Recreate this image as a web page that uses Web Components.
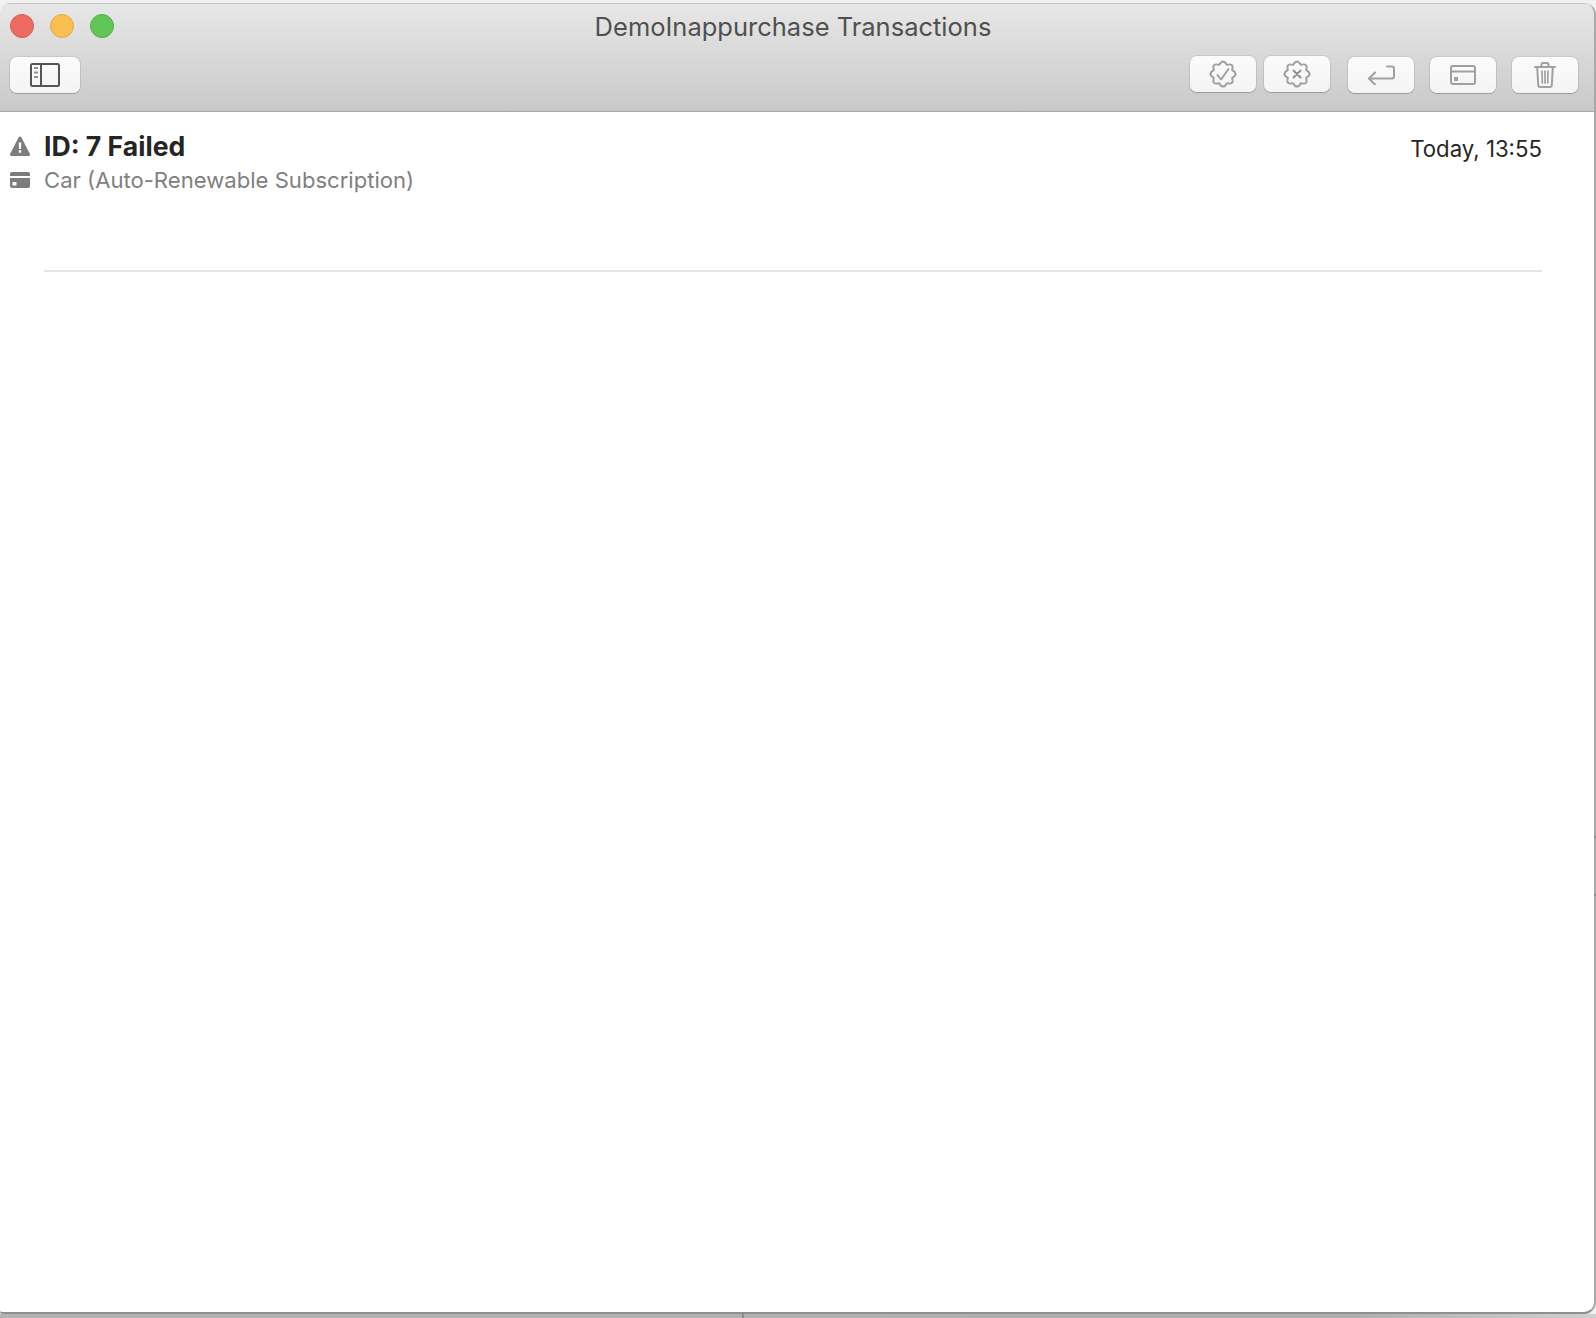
<!DOCTYPE html>
<html>
<head>
<meta charset="utf-8">
<title>DemoInappurchase Transactions</title>
<style>
    html, body { margin: 0; height: 100%; background: #f1f1f1; }
    body { font-family: Inter, "Liberation Sans", sans-serif; overflow: hidden; }
    svg { display: block; }
</style>
</head>
<body>
<mac-desktop>
    <mac-window title="DemoInappurchase Transactions">
        <tool-button slot="left">
            <svg width="30" height="24" viewBox="0 0 30 24" fill="none" stroke="#555" stroke-width="2">
                <rect x="1" y="1" width="28" height="22" rx="1.5"/>
                <path d="M11 1v22"/>
                <path d="M4 5h4M4 9.500h4M4 14h4" stroke="#8f8f8f" stroke-width="2"/>
            </svg>
        </tool-button>
        <tool-button slot="right">
            <svg width="28" height="28" viewBox="0 0 28 28" fill="none" stroke="#a0a0a0" stroke-width="2" stroke-linejoin="round" stroke-linecap="round" overflow="visible">
                <path d="M10.210 4.850Q14 -2 17.790 4.850Q25.300 2.700 23.150 10.210Q30 14 23.150 17.790Q25.300 25.300 17.790 23.150Q14 30 10.210 23.150Q2.700 25.300 4.850 17.790Q-2 14 4.850 10.210Q2.700 2.700 10.210 4.850z"/>
                <path d="M8.500 15l3.500 4.500L19.500 9"/>
            </svg>
        </tool-button>
        <tool-button slot="right">
            <svg width="28" height="28" viewBox="0 0 28 28" fill="none" stroke="#a0a0a0" stroke-width="2" stroke-linejoin="round" stroke-linecap="round" overflow="visible">
                <path d="M10.210 4.850Q14 -2 17.790 4.850Q25.300 2.700 23.150 10.210Q30 14 23.150 17.790Q25.300 25.300 17.790 23.150Q14 30 10.210 23.150Q2.700 25.300 4.850 17.790Q-2 14 4.850 10.210Q2.700 2.700 10.210 4.850z"/>
                <path d="M10.500 10.500l7 7M17.500 10.500l-7 7" stroke="#909090"/>
            </svg>
        </tool-button>
        <tool-button slot="right" low gap="18">
            <svg width="28" height="20" viewBox="0 0 28 20" fill="none" stroke="#a0a0a0" stroke-width="2" stroke-linejoin="round" stroke-linecap="round">
                <path d="M20 1.500h5a2 2 0 0 1 2 2v8a2 2 0 0 1-2 2H2"/>
                <path d="M8 7.500l-6 6 6 6"/>
            </svg>
        </tool-button>
        <tool-button slot="right" low gap="16">
            <svg width="26" height="20" viewBox="0 0 26 20" fill="none" stroke="#a0a0a0" stroke-width="2" stroke-linejoin="round">
                <rect x="1" y="1" width="24" height="18" rx="2"/>
                <path d="M1 6.500h24"/>
                <rect x="4" y="12" width="4" height="4" fill="#a0a0a0" stroke="none"/>
            </svg>
        </tool-button>
        <tool-button slot="right" low gap="16">
            <svg width="22" height="26" viewBox="0 0 22 26" fill="none" stroke="#a0a0a0" stroke-width="2" stroke-linejoin="round" stroke-linecap="round">
                <path d="M1 5h20M7.500 5V2.600A1.600 1.600 0 0 1 9.100 1h3.800a1.600 1.600 0 0 1 1.600 1.600V5"/>
                <path d="M3.200 5l1 18a2 2 0 0 0 2 2h9.600a2 2 0 0 0 2-2l1-18"/>
                <path d="M8 9l.3 12M11 9v12M14 9l-.3 12" stroke-width="1.700"/>
            </svg>
        </tool-button>

        <transaction-row when="Today, 13:55">
            <span slot="title">ID: 7 Failed</span>
            <span slot="subtitle">Car (Auto-Renewable Subscription)</span>
        </transaction-row>
    </mac-window>
</mac-desktop>

<script>
    class MacDesktop extends HTMLElement {
        constructor() {
            super();
            this.attachShadow({ mode: "open" });
            this.shadowRoot.innerHTML = `
                <style>
                    :host {
                        display: flex;
                        flex-direction: column;
                        position: relative;
                        width: 1596px;
                        height: 1318px;
                        padding-top: 3px;
                        box-sizing: border-box;
                        overflow: hidden;
                    }
                    .content { flex: 1; min-height: 0; display: flex; }
                    .strip {
                        height: 4px;
                        flex: none;
                        background: linear-gradient(90deg, #b2b2b2 0, #afafaf 85%, #cfcfcf 100%);
                    }
                    .tick { position: absolute; background: #8b8b8b; }
                    .tick.bottom { left: 742px; bottom: 0; width: 2px; height: 6px; }
                    .tick.r1 { left: 1594px; top: 836px; width: 2px; height: 2px; }
                    .tick.r2 { left: 1594px; top: 894px; width: 2px; height: 2px; }
                </style>
                <div class="content"><slot></slot></div>
                <div class="strip"></div>
                <i class="tick bottom"></i><i class="tick r1"></i><i class="tick r2"></i>
            `;
        }
    }

    class MacWindow extends HTMLElement {
        constructor() {
            super();
            this.attachShadow({ mode: "open" });
        }
        connectedCallback() {
            this.shadowRoot.innerHTML = `
                <style>
                    :host {
                        display: flex;
                        flex-direction: column;
                        flex: none;
                        width: 1596px;
                        box-sizing: border-box;
                        background: #fff;
                        border-right: 2px solid #a9a9a9;
                        border-bottom: 2px solid #8f8f8f;
                        border-radius: 10px 12px 12px 3px;
                        overflow: hidden;
                    }
                    header {
                        flex: none;
                        height: 109px;
                        box-sizing: border-box;
                        border-top: 1px solid #c2c2c2;
                        border-bottom: 1px solid #a8a8a8;
                        background: linear-gradient(#e7e7e7, #c9c9c9);
                    }
                    .top {
                        display: grid;
                        grid-template-columns: 1fr auto 1fr;
                        align-items: center;
                        height: 44px;
                        padding: 0 18px 0 10px;
                    }
                    .lights { display: flex; gap: 16px; }
                    .lights i { width: 24px; height: 24px; border-radius: 50%; box-sizing: border-box; }
                    .close { background: #ee6a62; border: 1px solid #dc5a52; }
                    .min { background: #f9bf52; border: 1px solid #e4a840; }
                    .zoom { background: #62c557; border: 1px solid #50ae44; }
                    h1 {
                        margin: 0;
                        font: 400 25.5px Inter, "Liberation Sans", sans-serif;
                        color: #505050;
                        white-space: nowrap;
                    }
                    .bar {
                        display: flex;
                        justify-content: space-between;
                        align-items: flex-start;
                        padding: 8px 16px 0 10px;
                    }
                    .group { display: flex; align-items: flex-start; }
                    main { flex: 1; min-height: 0; }
                </style>
                <header>
                    <div class="top">
                        <div class="lights"><i class="close"></i><i class="min"></i><i class="zoom"></i></div>
                        <h1>${this.getAttribute("title")}</h1>
                        <div></div>
                    </div>
                    <div class="bar">
                        <div class="group"><slot name="left"></slot></div>
                        <div class="group"><slot name="right"></slot></div>
                    </div>
                </header>
                <main><slot></slot></main>
            `;
        }
    }

    class ToolButton extends HTMLElement {
        constructor() {
            super();
            this.attachShadow({ mode: "open" });
        }
        connectedCallback() {
            const wide = this.getAttribute("slot") === "left" ? 70 : 66;
            const low = this.hasAttribute("low") || wide === 70;
            const gap = this.getAttribute("gap") || 8;
            const isFirstRight = this.getAttribute("slot") === "right" && this.previousElementSibling.getAttribute("slot") === "left";
            this.shadowRoot.innerHTML = `
                <style>
                    :host {
                        display: flex;
                        align-items: center;
                        justify-content: center;
                        width: ${wide}px;
                        height: 36px;
                        box-sizing: border-box;
                        margin-left: ${isFirstRight || wide === 70 ? 0 : gap}px;
                        margin-top: ${low ? 1 : 0}px;
                        border-radius: 7px;
                        background: linear-gradient(#fbfbfb, #f4f4f4);
                        box-shadow: 0 0 0 1px rgba(0, 0, 0, .07), 0 1px 1px #a8a8a8;
                    }
                </style>
                <slot></slot>
            `;
        }
    }

    class TransactionRow extends HTMLElement {
        constructor() {
            super();
            this.attachShadow({ mode: "open" });
        }
        connectedCallback() {
            this.shadowRoot.innerHTML = `
                <style>
                    :host {
                        display: grid;
                        grid-template-columns: 20px 1fr auto;
                        column-gap: 14px;
                        padding: 20px 52px 0 10px;
                        font-family: Inter, "Liberation Sans", sans-serif;
                    }
                    .title { font-size: 26.6px; font-weight: 700; line-height: 29px; color: #252525; padding-bottom: 1px; }
                    .when { font-size: 22.2px; line-height: 27px; color: #262626; padding-top: 3px; }
                    .sub { grid-column: 2 / 4; font-size: 22.1px; line-height: 36px; color: #808080; }
                    .icon { align-self: center; display: block; }
                    .warn { margin-bottom: 3px; }
                    .rule {
                        grid-column: 2 / 4;
                        margin-top: 72px;
                        height: 2px;
                        background: #e5e5e5;
                    }
                </style>
                <svg class="icon warn" width="20" height="20" viewBox="0 0 20 20">
                    <path fill="#7d7d7d" stroke="#7d7d7d" stroke-width="3" stroke-linejoin="round" d="M10 2L1.500 18.500h17z"/>
                    <path fill="#fff" d="M8.700 6.500h2.600l-.4 6.500H9.100zM8.800 14.300h2.400v2.400H8.800z"/>
                </svg>
                <div class="title"><slot name="title"></slot></div>
                <div class="when">${this.getAttribute("when")}</div>
                <svg class="icon" width="20" height="16" viewBox="0 0 20 16">
                    <path fill="#7d7d7d" d="M2 0h16a2 2 0 0 1 2 2v2H0V2a2 2 0 0 1 2-2zM0 6h20v8a2 2 0 0 1-2 2H2a2 2 0 0 1-2-2zM2.500 10v3.500h4V10z" fill-rule="evenodd"/>
                </svg>
                <div class="sub"><slot name="subtitle"></slot></div>
                <div class="rule"></div>
            `;
        }
    }

    customElements.define("mac-desktop", MacDesktop);
    customElements.define("mac-window", MacWindow);
    customElements.define("tool-button", ToolButton);
    customElements.define("transaction-row", TransactionRow);
</script>
</body>
</html>
